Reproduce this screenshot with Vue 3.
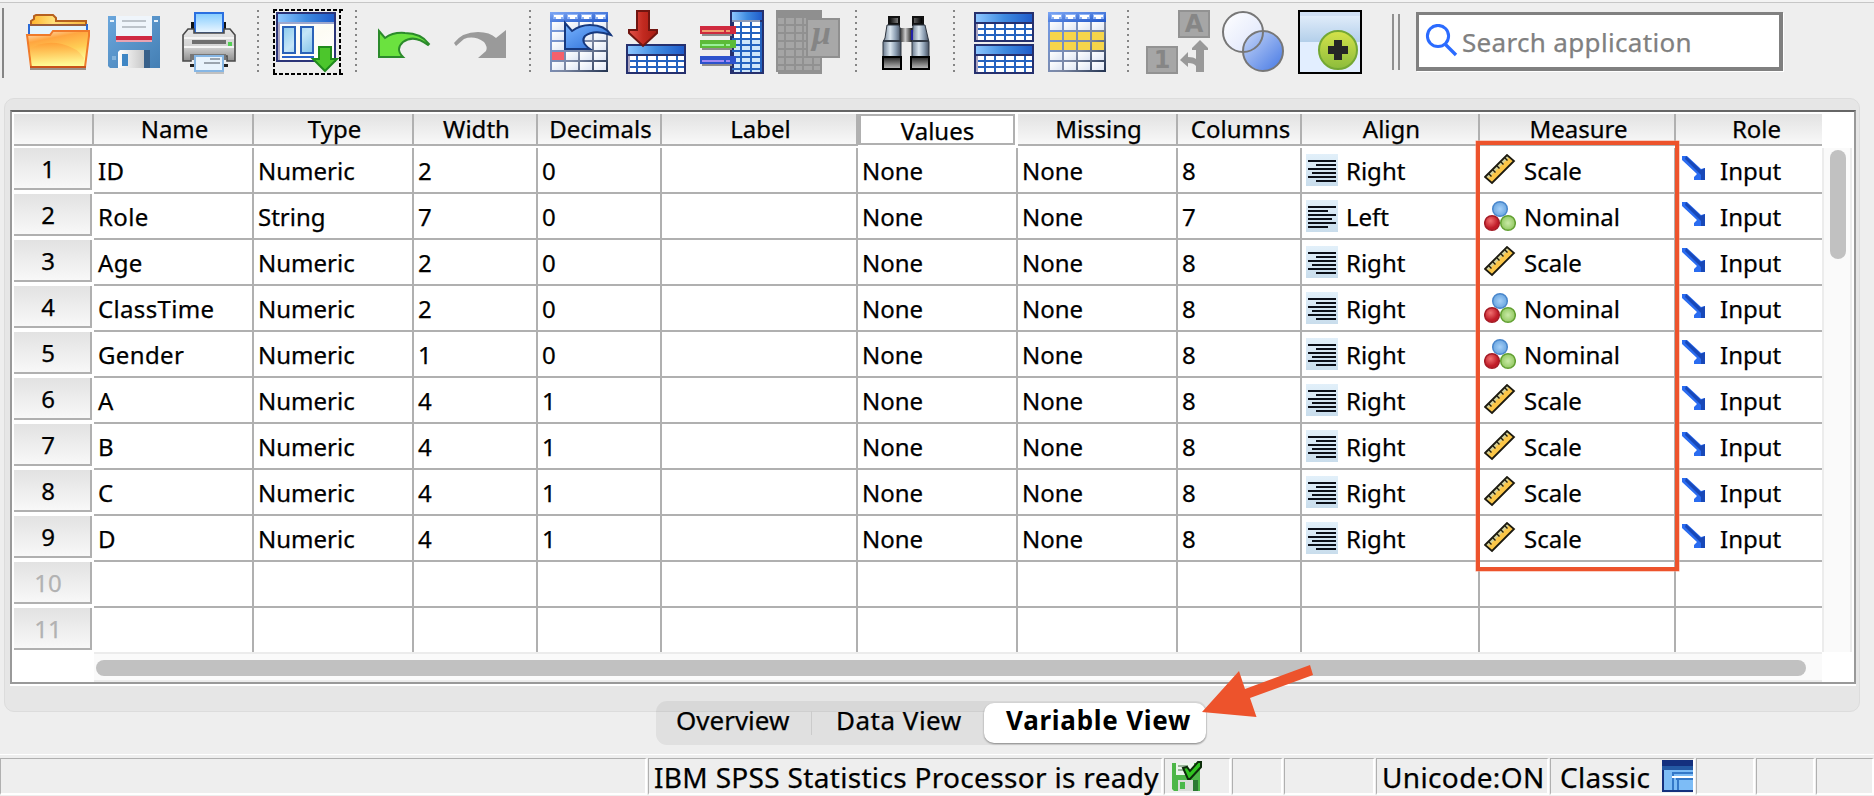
<script setup>
const columns = [
  { key: 'name', title: 'Name' },
  { key: 'type', title: 'Type' },
  { key: 'width', title: 'Width' },
  { key: 'decimals', title: 'Decimals' },
  { key: 'label', title: 'Label' },
  { key: 'values', title: 'Values', active: true },
  { key: 'missing', title: 'Missing' },
  { key: 'cols', title: 'Columns' },
  { key: 'align', title: 'Align' },
  { key: 'measure', title: 'Measure' },
  { key: 'role', title: 'Role' },
]

const variable = (name, type, width, decimals, cols, align, measure) => ({
  name, type, width, decimals, label: '', values: 'None', missing: 'None', cols, align, measure, role: 'Input',
})

const rows = [
  variable('ID', 'Numeric', 2, 0, 8, 'Right', 'Scale'),
  variable('Role', 'String', 7, 0, 7, 'Left', 'Nominal'),
  variable('Age', 'Numeric', 2, 0, 8, 'Right', 'Scale'),
  variable('ClassTime', 'Numeric', 2, 0, 8, 'Right', 'Nominal'),
  variable('Gender', 'Numeric', 1, 0, 8, 'Right', 'Nominal'),
  variable('A', 'Numeric', 4, 1, 8, 'Right', 'Scale'),
  variable('B', 'Numeric', 4, 1, 8, 'Right', 'Scale'),
  variable('C', 'Numeric', 4, 1, 8, 'Right', 'Scale'),
  variable('D', 'Numeric', 4, 1, 8, 'Right', 'Scale'),
  {},
  {},
]

const hasIcon = (key) => key === 'align' || key === 'measure' || key === 'role'
const gridCols = [2, 16, 30, 44]
const gridRows = [10, 20, 30, 40, 50]
</script>

<template>
  <div class="app">
    <svg class="defs" width="0" height="0">
      <defs>
        <linearGradient id="gBlue" x1="0" x2="1"><stop offset="0" stop-color="#8cc6ff" /><stop offset=".5" stop-color="#3f8be0" /><stop offset="1" stop-color="#1f5ccb" /></linearGradient>
        <linearGradient id="gHead" x1="0" x2="1" y2="1"><stop offset="0" stop-color="#7fa8f5" /><stop offset="1" stop-color="#1f56c8" /></linearGradient>
        <linearGradient id="gFrame" x2="1" y2="1"><stop offset="0" stop-color="#6f9cf0" /><stop offset=".6" stop-color="#7c88a4" /><stop offset="1" stop-color="#22324f" /></linearGradient>
        <linearGradient id="gCell" x2="1" y2="1"><stop offset="0" stop-color="#fff" /><stop offset="1" stop-color="#dfe6f4" /></linearGradient>
        <linearGradient id="gFolder" x2=".35" y2="1"><stop offset="0" stop-color="#ffe9d2" /><stop offset=".3" stop-color="#ffa640" /><stop offset=".65" stop-color="#ffce55" /><stop offset="1" stop-color="#fffd9a" /></linearGradient>
        <linearGradient id="gFolderLow" x2="0" y2="1"><stop offset="0" stop-color="#ff9c33" /><stop offset="1" stop-color="#ffff99" /></linearGradient>
        <linearGradient id="gTab" x2="1"><stop offset="0" stop-color="#ffb52e" /><stop offset=".4" stop-color="#ffe07a" /><stop offset="1" stop-color="#f9b63c" /></linearGradient>
        <linearGradient id="gSave" x2="1" y2="1"><stop offset="0" stop-color="#6aa6dc" /><stop offset="1" stop-color="#447fb4" /></linearGradient>
        <linearGradient id="gMetal" x2="1"><stop offset="0" stop-color="#fff" /><stop offset="1" stop-color="#bcbcbc" /></linearGradient>
        <linearGradient id="gPrint" x2="0" y2="1"><stop offset="0" stop-color="#e8e8e8" /><stop offset=".55" stop-color="#d2d2d2" /><stop offset="1" stop-color="#8e8e8e" /></linearGradient>
        <linearGradient id="gPaper" x2="0" y2="1"><stop offset="0" stop-color="#83ccff" /><stop offset="1" stop-color="#eef7ff" /></linearGradient>
        <linearGradient id="gWin" x2="1" y2="1"><stop offset="0" stop-color="#fff" /><stop offset=".5" stop-color="#fdfcf4" /><stop offset="1" stop-color="#fff" /></linearGradient>
        <linearGradient id="gPane" x2="1" y2="1"><stop offset="0" stop-color="#8ccbed" /><stop offset=".5" stop-color="#c5e6f8" /><stop offset="1" stop-color="#84c4ea" /></linearGradient>
        <linearGradient id="gArrow" x2="1" y2="1"><stop offset="0" stop-color="#7ab5ff" /><stop offset="1" stop-color="#2467d4" /></linearGradient>
        <linearGradient id="gRed" x2="1"><stop offset="0" stop-color="#e2524a" /><stop offset=".5" stop-color="#c22a20" /><stop offset="1" stop-color="#a51b12" /></linearGradient>
        <linearGradient id="gTube" x2="1"><stop offset="0" stop-color="#6c7c90" /><stop offset=".4" stop-color="#dbe6ef" /><stop offset=".7" stop-color="#8ea0b4" /><stop offset="1" stop-color="#454f60" /></linearGradient>
        <linearGradient id="gFoot" x2="0" y2="1"><stop offset="0" stop-color="#222" /><stop offset="1" stop-color="#c2c2c2" /></linearGradient>
        <linearGradient id="gEye" x2="1"><stop offset="0" stop-color="#111" /><stop offset=".45" stop-color="#ccc" /><stop offset="1" stop-color="#000" /></linearGradient>
        <linearGradient id="gVennA" x2="1" y2="1"><stop offset="0" stop-color="#fff" /><stop offset="1" stop-color="#dbe3fb" /></linearGradient>
        <linearGradient id="gVennB" x2="1" y2="1"><stop offset="0" stop-color="#c9d8f8" /><stop offset="1" stop-color="#4578e4" /></linearGradient>
        <linearGradient id="gSky" x2="0" y2="1"><stop offset="0" stop-color="#e6f0fc" /><stop offset="1" stop-color="#b3cfea" /></linearGradient>
        <linearGradient id="gLime" x2="0" y2="1"><stop offset="0" stop-color="#d5e34a" /><stop offset="1" stop-color="#8cbc3c" /></linearGradient>
        <radialGradient id="gBallB"><stop offset="0" stop-color="#a6d0f8" /><stop offset="1" stop-color="#6ba6e0" /></radialGradient>
        <radialGradient id="gBallR" cx=".4" cy=".35"><stop offset="0" stop-color="#f07070" /><stop offset="1" stop-color="#c01c28" /></radialGradient>
        <radialGradient id="gBallG"><stop offset="0" stop-color="#c9eaa6" /><stop offset="1" stop-color="#93c963" /></radialGradient>
        <linearGradient id="gAlign" x2="0" y2="1"><stop offset="0" stop-color="#e2f0fa" /><stop offset="1" stop-color="#c9ddec" /></linearGradient>

        <symbol id="sheet" viewBox="0 0 58 60">
          <rect width="58" height="60" fill="url(#gFrame)" />
          <rect width="58" height="10" fill="url(#gHead)" />
          <template v-for="x in gridCols" :key="x">
            <rect :x="x + 1" y="2" width="11" height="5" fill="#8fb3f5" />
            <path :d="`M${x + 2} 3h9v2h-2v2h-5v-2h-2z`" fill="#fff" />
            <rect v-for="y in gridRows" :key="y" :x="x" :y="y" width="12" height="8" fill="url(#gCell)" />
          </template>
        </symbol>
        <symbol id="dataset" viewBox="0 0 60 30">
          <rect width="60" height="30" fill="#25306e" />
          <rect x="2" y="2" width="56" height="8" fill="url(#gBlue)" />
          <rect x="2" y="12" width="2" height="16" fill="#a9a4c0" />
          <rect x="4" y="12" width="54" height="16" fill="#fff" />
          <path d="M4 17h54M4 23h54M11 12v16M21 12v16M31 12v16M41 12v16M51 12v16" stroke="#2463c0" stroke-width="2" />
        </symbol>
      </defs>
    </svg>

    <header class="toolbar">
      <svg width="20" height="98" viewBox="0 0 20 98"><path d="M3 8v70" stroke="#858585" stroke-width="2" /></svg>
      <svg width="80" height="98" viewBox="20 0 80 98">
        <path d="M30 68h56v2H30z" fill="#9a8f86" />
        <path d="M31 26v-5l3-2v-3l2-1h17l3 3v3h30v5z" fill="url(#gTab)" stroke="#b7611f" stroke-width="2" />
        <path d="M29 25h58v12H29z" fill="#e3f3fd" stroke="#2a6ad6" stroke-width="2" />
        <path d="M30 25h56" stroke="#9a5c3a" stroke-width="2" />
        <path d="M27 35h23l3-4h36v5l-4 31H31z" fill="url(#gFolder)" stroke="#ef7a2a" stroke-width="2" />
        <path d="M30 49q14-9 32-5 16 4 22 14l-1 8H32z" fill="url(#gFolderLow)" opacity=".75" />
        <path d="M30 67h56" stroke="#c9541a" stroke-width="2" />
      </svg>
      <svg width="70" height="98" viewBox="100 0 70 98">
        <path d="M108 16h52v52h-50l-2-2z" fill="url(#gSave)" />
        <path d="M116 16h36v20h-36z" fill="#eff5fb" />
        <path d="M122 21h24M122 27h24" stroke="#bcc3ca" stroke-width="2" />
        <path d="M116 36h36v4h-36z" fill="#cf2a44" /><path d="M116 40h36v2h-36z" fill="#e9a3b2" />
        <path d="M110 20h4v2h-4zM154 20h4v2h-4z" fill="#e8f2fa" /><path d="M112 56h4v4h-4z" fill="#84b4dc" />
        <path d="M118 52l2-2h30v18h-32z" fill="url(#gMetal)" />
        <path d="M144 50h6v18h-6z" fill="#386089" /><path d="M122 54h6v12h-6z" fill="#3f86c4" />
      </svg>
      <svg width="84" height="98" viewBox="170 0 84 98">
        <path d="M191 22h4v8h-4zM223 22h3v8h-3z" fill="#111" />
        <path d="M195 13h28v20h-28z" fill="url(#gPaper)" stroke="#2a6fe0" stroke-width="2" />
        <path d="M188 29h6v4h30v-4h6l5 6v26h-8v-5h-36v5h-8V35z" fill="url(#gPrint)" stroke="#4a4a4a" stroke-width="1.6" />
        <path d="M184 38h50M184 47h50" stroke="#f4f4f4" stroke-width="2" />
        <path d="M192 40h34v4h-34z" fill="#6e6e6e" /><path d="M228 42h4v4h-4z" fill="#55cf55" />
        <path d="M190 54h36v6h-36z" fill="#777" />
        <path d="M190 64h4v3h-4zM224 64h4v3h-4z" fill="#222" />
        <path d="M195 56h28v15h-28z" fill="#e8f3fc" stroke="#86b6e4" stroke-width="2" />
        <path d="M210 59h10M204 63h16" stroke="#9aa4ae" stroke-width="2" />
        <path d="M196 73h28" stroke="#c0c0c0" stroke-width="2" />
      </svg>
      <i class="dots"></i>
      <svg width="90" height="98" viewBox="262 0 90 98">
        <path d="M273 10h70M273 74h70M274 9v66M340 9v66" fill="none" stroke="#000" stroke-width="2" stroke-dasharray="4 2" />
        <path d="M276 12h60v50h-60z" fill="#2b3478" /><path d="M278 14h56v8h-56z" fill="url(#gBlue)" />
        <path d="M278 22h56v2h-56z" fill="#9da8cf" /><path d="M280 24h54v36h-54z" fill="url(#gWin)" /><path d="M278 24h2v36h-2z" fill="#a9a4c0" />
        <path d="M283 27h12v26h-12zM301 27h12v26h-12z" fill="url(#gPane)" stroke="#2a62b8" stroke-width="2" />
        <path d="M282 57h32" stroke="#2a62c8" stroke-width="2" />
        <path d="M319 47h12v12h6l-12 12-12-12h6z" fill="#4cc62c" stroke="#1f8a1c" stroke-width="2" />
      </svg>
      <i class="dots"></i>
      <svg width="166" height="98" viewBox="360 0 166 98">
        <path d="M379 31l6 7q8-6 20-5 16 0 24 11l-1 1q-14-11-25-3-8 7 0 15h-24z" fill="#6be23f" stroke="#2b8a2b" stroke-width="2" />
        <path d="M506 30v28h-28l8-7q2-4-2-9-10-7-20-3l-8 7-2-3q8-11 24-11 12 0 18 6z" fill="#9a9a9a" />
      </svg>
      <i class="dots"></i>
      <svg width="86" height="98" viewBox="534 0 86 98">
        <use href="#sheet" x="550" y="12" width="58" height="60" />
        <path d="M552 52h12v8h-12z" fill="#f4606c" />
        <path d="M565 23l7 8q8-6 18-6 15 0 21 10-17-6-26 1-5 6 5 13h-25z" fill="url(#gArrow)" stroke="#16387e" stroke-width="2" />
      </svg>
      <svg width="72" height="98" viewBox="620 0 72 98">
        <use href="#dataset" x="626" y="44" width="60" height="30" />
        <path d="M637 11h12v19h8v3l-14 13-14-13v-3h8z" fill="url(#gRed)" stroke="#701510" stroke-width="2" />
      </svg>
      <svg width="78" height="98" viewBox="692 0 78 98">
        <path d="M730 10h34v64h-34z" fill="#25306e" /><path d="M732 12h30v8h-30z" fill="url(#gBlue)" />
        <path d="M732 20h28v2h-28z" fill="#8e9bb8" /><path d="M734 22h26v16h-26z" fill="#fff" /><path d="M734 38h26v34h-26z" fill="#cfe6fa" />
        <path d="M732 27h30M732 33h30M732 39h30M732 45h30M732 51h30M732 57h30M732 63h30M732 69h30M741 22v50M751 22v50M761 22v50" stroke="#2463c0" stroke-width="2" />
        <path d="M702 35h30M702 49h30M702 65h30" stroke="#8c8c8c" stroke-width="2" />
        <path d="M700 26h36v8h-36z" fill="#cf2a3e" /><path d="M702 31h22M726 31h4" stroke="#f0a070" stroke-width="2" />
        <path d="M700 40h36v8h-36z" fill="#5bbb38" /><path d="M702 45h22M726 45h4" stroke="#9af09a" stroke-width="2" />
        <path d="M700 56h36v8h-36z" fill="#2c52cc" /><path d="M702 61h22M726 61h4" stroke="#a08af4" stroke-width="2" />
      </svg>
      <svg width="82" height="98" viewBox="770 0 82 98">
        <path d="M778 72h44v2h-44z" fill="#929292" />
        <path d="M776 10h46v62h-46z" fill="#a5a5a5" /><path d="M776 10h46v8h-46z" fill="#8f8f8f" />
        <path d="M776 25h46M776 33h46M776 41h46M776 49h46M776 57h46M776 65h46M777 18v52M785 18v52M795 18v52M803 18v52M813 18v52M821 18v52M776 71h46" stroke="#919191" stroke-width="2" />
        <path d="M807 19h32v38h-32z" fill="#a8a8a8" stroke="#8f8f8f" stroke-width="2" />
        <text x="812" y="44" class="mu">μ</text>
      </svg>
      <i class="dots"></i>
      <svg width="90" height="98" viewBox="860 0 90 98">
        <path d="M899 28h14v14h-14z" fill="url(#gEye)" />
        <path d="M888 16h12v10h-12zM912 16h12v10h-12z" fill="#111" /><path d="M890 18h8v5h-8zM914 18h8v5h-8z" fill="url(#gEye)" />
        <path d="M887 25h12l1 3v12l1 2v16h-18V42l2-4z" fill="url(#gTube)" stroke="#2f3640" />
        <path d="M913 25h12l3 13 1 4v16h-17V42z" fill="url(#gTube)" stroke="#2f3640" />
        <path d="M883 41h18M912 41h17" stroke="#333b46" stroke-width="2" /><path d="M912 30v10" stroke="#2222a8" stroke-width="2" />
        <path d="M883 57h18v12h-18zM911 57h18v12h-18z" fill="url(#gFoot)" stroke="#000" stroke-width="2" />
      </svg>
      <i class="dots"></i>
      <svg width="82" height="98" viewBox="958 0 82 98">
        <use href="#dataset" x="974" y="12" width="60" height="30" /><use href="#dataset" x="974" y="44" width="60" height="30" />
      </svg>
      <svg width="84" height="98" viewBox="1040 0 84 98">
        <use href="#sheet" x="1048" y="12" width="58" height="60" />
        <path d="M1050 32h12v8h-12zm14 0h12v8h-12zm14 0h12v8h-12zm14 0h12v8h-12zM1050 42h12v8h-12zm14 0h12v8h-12zm14 0h12v8h-12zm14 0h12v8h-12z" fill="#f6d54a" />
      </svg>
      <i class="dots"></i>
      <svg width="86" height="98" viewBox="1132 0 86 98">
        <path d="M1179 11h30v26h-30zM1147 47h30v26h-30z" fill="#a6a6a6" stroke="#929292" stroke-width="2" />
        <text x="1194" y="32" class="glyph">A</text><text x="1162" y="68" class="glyph">1</text>
        <path d="M1200 40l8 8v2h-4v22h-8v-6q-2-3-8-3v4l-8-7 8-8v5q6 0 8 2v-9h-4v-2z" fill="#999" />
      </svg>
      <svg width="72" height="98" viewBox="1218 0 72 98">
        <circle cx="1243" cy="32" r="20" fill="url(#gVennA)" /><circle cx="1263" cy="51" r="20" fill="url(#gVennB)" />
        <circle cx="1243" cy="32" r="20" fill="none" stroke="#777" stroke-width="2" /><circle cx="1263" cy="51" r="20" fill="none" stroke="#777" stroke-width="2" />
      </svg>
      <svg width="80" height="98" viewBox="1290 0 80 98">
        <path d="M1299 11h62v62h-62z" fill="#e2eeff" stroke="#000" stroke-width="2" /><path d="M1300 12h60v30h-60z" fill="url(#gSky)" /><path d="M1300 12h60v4h-60z" fill="#cfdff4" />
        <circle cx="1338" cy="50" r="19" fill="url(#gLime)" stroke="#74a834" stroke-width="2" />
        <path d="M1334 40h8v6h6v8h-6v6h-8v-6h-6v-8h6z" fill="#262626" />
      </svg>
      <svg width="46" height="98" viewBox="1370 0 46 98"><path d="M1393 14v56M1399 14v56" stroke="#909090" stroke-width="2" /></svg>
      <div class="search">
        <svg width="34" height="34" viewBox="0 0 34 34"><circle cx="13" cy="12" r="10.6" fill="none" stroke="#2b6bff" stroke-width="3" /><path d="M20.5 20.5L31 31" stroke="#2b6bff" stroke-width="3.4" /></svg>
        <span class="search-text">Search application</span>
      </div>
    </header>

    <main class="panel">
      <div class="frame">
        <div class="body">
          <div class="grid">
            <div class="line head">
              <div class="corner"></div>
              <div v-for="c in columns" :key="c.key" class="th" :class="{ active: c.active }"><span>{{ c.title }}</span></div>
            </div>
            <div v-for="(r, i) in rows" :key="i" class="line">
              <div class="num" :class="{ empty: !r.name }">{{ i + 1 }}</div>
              <div v-for="c in columns" :key="c.key" class="td" :class="c.key">
                <svg v-if="r.name && hasIcon(c.key)" class="cell-icon" width="32" height="32" viewBox="0 0 32 32">
                  <template v-if="c.key === 'align'">
                    <rect width="32" height="32" fill="url(#gAlign)" />
                    <path v-if="r.align === 'Right'" d="M2 7h28M10 11h20M2 15h28M6 19h24M2 23h28M10 27h20" stroke="#0b0f18" stroke-width="2" />
                    <path v-else d="M2 7h28M2 11h20M2 15h28M2 19h24M2 23h28M2 27h20" stroke="#0b0f18" stroke-width="2" />
                  </template>
                  <template v-else-if="r.measure === 'Scale' && c.key === 'measure'">
                    <path d="M1 23L23 1l7 6L8 29z" fill="#fbc648" /><path d="M3 23L24 2" stroke="#d2d29c" stroke-width="3.500" />
                    <path d="M1 23L23 1l7 6L8 29z" fill="none" stroke="#1c1a10" stroke-width="1.800" />
                    <path d="M5 20l2.500 2.500M9 16l2.500 2.500M13 12l2.500 2.500M17 8l2.500 2.500M21 4l2.500 2.500" stroke="#1c1a10" stroke-width="1.400" />
                  </template>
                  <template v-else-if="c.key === 'measure'">
                    <circle cx="16" cy="9" r="7.3" fill="url(#gBallB)" stroke="#4a87cc" stroke-width="1.5" />
                    <circle cx="8" cy="23" r="7.3" fill="url(#gBallR)" stroke="#a41c26" stroke-width="1.5" />
                    <circle cx="24" cy="23" r="7.3" fill="url(#gBallG)" stroke="#62a032" stroke-width="1.5" />
                  </template>
                  <template v-else>
                    <path d="M2 2h5l14 13 4-1v12H14v-3l3-3L2 6z" fill="#2a6cf0" /><path d="M6 2l15 14 4-2v12h-4v-5L5 5z" fill="#1848b8" />
                  </template>
                </svg>
                <span class="value">{{ r[c.key] }}</span>
              </div>
            </div>
          </div>
          <div class="vscroll"><div class="vthumb"></div></div>
        </div>
        <div class="hscroll"><div class="hthumb"></div></div>
      </div>
      <div class="mark"></div>
    </main>

    <nav class="tabs">
      <div class="tab overview"><span>Overview</span></div>
      <div class="tab data"><span>Data View</span></div>
      <div class="tab current"><span>Variable View</span></div>
      <svg class="pointer" width="116" height="60" viewBox="1200 662 116 60"><path d="M1202 712l37-41 6 18 65-24 3 10-63 23 6.500 19z" fill="#ed532c" /></svg>
    </nav>

    <footer class="status">
      <div class="slot s1"></div>
      <div class="slot s2"><span class="ready">IBM SPSS Statistics Processor is ready</span></div>
      <div class="slot s3">
        <svg width="32" height="32" viewBox="0 0 32 32">
          <path d="M1 3h28v28H3l-2-2z" fill="#4db748" /><path d="M5 3h18v12H5z" fill="#edf5ec" /><path d="M7 6h10M7 10h8" stroke="#9ab59a" stroke-width="2" />
          <path d="M7 20h20v11H7z" fill="#d8dcd8" /><path d="M9 22h5v7H9z" fill="#48b948" /><path d="M22 20h5v11h-5z" fill="#2c7a34" />
          <path d="M12 8l4-1 3 4 8-9h3v5L19 19h-2z" fill="#30c420" stroke="#0c2c0a" stroke-width="2" />
        </svg>
      </div>
      <div class="slot s4"></div>
      <div class="slot s5"></div>
      <div class="slot s6"><span class="unicode">Unicode:ON</span></div>
      <div class="slot s7">
        <span class="classic">Classic</span>
        <svg width="31" height="32" viewBox="0 0 31 32">
          <path d="M0 0h31v32H0z" fill="#14307e" /><path d="M0 6h31v4H0z" fill="#245aa4" /><path d="M2 10h29v20H2z" fill="#7dbcf6" />
          <path d="M10 13h21M11 12v18M16 18v12M14 19h17" stroke="#3478c8" stroke-width="2" /><path d="M10 17h21" stroke="#fff" stroke-width="2" />
        </svg>
      </div>
      <div class="slot s8"></div>
      <div class="slot s9"></div>
      <div class="slot s10"></div>
    </footer>
  </div>
</template>

<style>
html, body { overflow: hidden; background: #eee; }
</style>

<style scoped>
.app { width: 1874px; height: 796px; box-sizing: border-box; display: flex; flex-direction: column; position: relative; overflow: hidden; background: #eee; color: #000; font-family: "Noto Sans", "Open Sans", sans-serif; font-size: 24px; -webkit-text-stroke: .25px; }
.defs { position: absolute; }
.toolbar { height: 98px; flex: none; display: flex; align-items: flex-start; background: linear-gradient(#f3f3f3 2px, #c6c6c6 2px, #c6c6c6 3px, transparent 3px); }
.toolbar > svg { flex: none; display: block; }
.dots { flex: none; width: 2px; height: 62px; margin: 10px 3px 0; background: repeating-linear-gradient(#858585 0 2px, transparent 2px 6px); }
.mu { font: italic bold 34px "Liberation Serif", serif; fill: #858585; }
.glyph { font: bold 24px "DejaVu Sans", sans-serif; fill: #868686; text-anchor: middle; }
.search { box-sizing: border-box; flex: none; width: 367px; height: 59px; margin-top: 12px; border: solid #808080; border-width: 3px 4px 4px 3px; background: #fff; box-shadow: 1px 1px #fff; display: flex; align-items: center; padding-left: 6px; }
.search-text { font-size: 26px; line-height: 50px; color: #808080; margin: 2px 0 0 3px; letter-spacing: .33px; white-space: nowrap; }

.panel { position: relative; box-sizing: border-box; flex: none; width: 1856px; height: 614px; margin-left: 4px; padding: 11px 3px 0 5px; border: 1px solid #dcdcdc; border-radius: 10px; background: #e6e6e6; }
.frame { box-sizing: border-box; height: 574px; border: 2px solid #999; border-top-color: #666; background: #fff; padding: 2px 0 0 2px; box-shadow: 0 2px #fff; }
.body { display: flex; height: 538px; }
.grid { width: 1808px; flex: none; }
.line { display: grid; grid-template-columns: 80px 160px 160px 124px 124px 196px 160px 160px 124px 178px 196px 146px; height: 46px; }
.line.head { height: 34px; }
.line:last-child { height: 44px; }
.corner, .th { box-sizing: border-box; height: 32px; border: solid #b0b0b0; border-width: 0 2px 2px 0; background: linear-gradient(#e2e2e2, #f8f8f8); text-align: center; line-height: 30px; padding-left: 3px; }
.th:last-child, .td:last-child { border-right: 0; }
.th:last-child { padding-left: 15px; }
.th.active { width: 157px; height: 31px; background: #fff; border-width: 2px 2px 2px 3px; line-height: 30px; padding-left: 1px; }
.num { box-sizing: border-box; width: 78px; height: 42px; border: solid #b0b0b0; border-width: 0 2px 2px 0; background: linear-gradient(#e2e2e2, #f8f8f8); text-align: center; line-height: 42px; padding-right: 8px; }
.num.empty { color: #b2b2b2; }
.td { box-sizing: border-box; border: solid #b0b0b0; border-width: 0 2px 2px 0; display: flex; align-items: center; padding-left: 4px; line-height: 42px; white-space: nowrap; }
.value { padding-top: 2px; }
.td.name { letter-spacing: .35px; }
.line:last-child .td { border-bottom: 0; }
.cell-icon { flex: none; margin-right: 8px; }
.vscroll { box-sizing: border-box; width: 30px; height: 504px; margin-top: 34px; border: solid #ececec; border-width: 0 2px; background: #fafafa; padding: 2px 6px; }
.vthumb { width: 16px; height: 109px; border-radius: 8px; background: #c1c1c1; }
.hscroll { box-sizing: border-box; width: 1728px; height: 30px; margin-left: 80px; border: solid #ececec; border-width: 2px 0; background: #fafafa; padding: 6px 2px; }
.hthumb { width: 1710px; height: 16px; border-radius: 8px; background: #c1c1c1; }
.mark { position: absolute; box-sizing: border-box; left: 1471px; top: 42px; width: 203px; height: 430px; border: 4px solid #ed532c; box-shadow: 0 0 0 .5px #f6a08a; }

.tabs { position: relative; box-sizing: border-box; flex: none; width: 551px; height: 44px; margin: -11px 0 0 656px; padding: 2px 1px 2px 0; border-radius: 11px; background: rgba(0, 0, 0, .06); display: flex; font-size: 26px; line-height: 35px; white-space: nowrap; }
.tab { box-sizing: border-box; }
.overview { width: 156px; padding-left: 20px; background: linear-gradient(#cbcbcb, #cbcbcb) right center / 1px 24px no-repeat; }
.data { width: 172px; padding-left: 24px; letter-spacing: .5px; }
.current { width: 222px; padding-left: 22px; border-radius: 10px; background: #fff; font-weight: bold; letter-spacing: .75px; -webkit-text-stroke: 0; box-shadow: 0 1px 2px rgba(0, 0, 0, .4); }
.pointer { position: absolute; left: 544px; top: -39px; }

.status { flex: none; display: flex; height: 42px; margin-top: 9px; padding-top: 4px; box-sizing: border-box; background: linear-gradient(#fff 1px, transparent 1px); font-size: 28px; line-height: 37px; white-space: nowrap; }
.slot { box-sizing: border-box; flex: none; height: 37px; border: solid #b0b0b0; border-width: 1px 2px 2px 1px; border-right-color: #fff; border-bottom-color: #fff; margin-right: 1px; display: flex; align-items: flex-start; }
.slot svg { flex: none; margin-top: 1px; }
.s1 { width: 647px; }
.s2 { width: 515px; padding-left: 5px; letter-spacing: .32px; }
.s3 { width: 67px; padding-left: 6px; }
.s4 { width: 51px; }
.s5 { width: 91px; }
.s6 { width: 173px; padding-left: 5px; letter-spacing: .35px; }
.s7 { width: 145px; padding-left: 9px; }
.s8 { width: 59px; }
.s9 { width: 59px; }
.s10 { width: 58px; }
.classic { width: 103px; letter-spacing: .3px; }
</style>
